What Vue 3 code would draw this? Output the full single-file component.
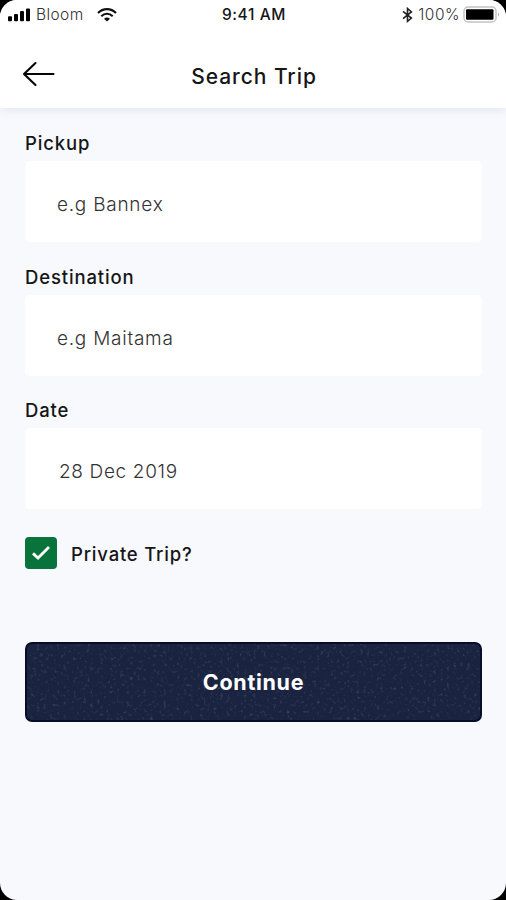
<script setup>
import { ref } from 'vue'

const fields = ref([
  { id: 'pickup', label: 'Pickup', text: 'e.g Bannex' },
  { id: 'destination', label: 'Destination', text: 'e.g Maitama' },
  { id: 'date', label: 'Date', text: '28 Dec 2019' },
])
const isPrivate = ref(true)
</script>

<template>
  <main class="screen">
    <header class="header">
      <div class="status">
        <div class="carrier">
          <svg class="signal" width="23" height="14" viewBox="0 0 23 14">
            <rect x="0" y="8.2" width="4" height="5" rx="1" />
            <rect x="6" y="6" width="4" height="7.2" rx="1" />
            <rect x="12" y="3" width="4" height="10.2" rx="1" />
            <rect x="18" y="0.5" width="4" height="12.7" rx="1" />
          </svg>
          <span class="carrier-name">Bloom</span>
          <svg class="wifi" width="20" height="14" viewBox="0 0 20 14">
            <path d="M1 5.1C6-.2 14-.2 19 5.1" fill="none" stroke="#111" stroke-width="2.2" />
            <path d="M4.3 8.3C7.5 5 12.5 5 15.7 8.3" fill="none" stroke="#111" stroke-width="2" />
            <path d="M7 10.7Q10 8.2 13 10.7L10 13.6Z" fill="#111" />
          </svg>
        </div>
        <span class="time">9:41 AM</span>
        <div class="power">
          <svg class="bluetooth" width="11" height="16" viewBox="0 0 11 16">
            <path d="M1 4.3L9.4 11 5.5 14.3V1.5L9.4 4.9 1 11.7" fill="none" stroke="#222" stroke-width="1.6" />
          </svg>
          <span class="percent">100%</span>
          <svg class="battery" width="37" height="18" viewBox="0 0 37 18">
            <rect x="1" y="1" width="32" height="15" rx="4" fill="#fff" stroke="#c4c4c4" stroke-width="1.5" />
            <rect x="3" y="3.3" width="27.5" height="10.4" rx="1" fill="#000" />
            <path d="M35 6.5q2 2 0 4z" fill="#aaa" />
          </svg>
        </div>
      </div>
      <div class="nav">
        <svg class="back" width="34" height="26" viewBox="0 0 34 26">
          <path d="M13.5 2L2 13L13.5 24M2 13H31.5" fill="none" stroke="#050505" stroke-width="2.1" stroke-linecap="round" stroke-linejoin="round" />
        </svg>
        <h1 class="title">Search Trip</h1>
      </div>
    </header>

    <form class="form" @submit.prevent>
      <div v-for="f in fields" :key="f.id" class="field">
        <span class="label">{{ f.label }}</span>
        <div class="input" :class="f.id"><span>{{ f.text }}</span></div>
      </div>

      <div class="private" @click="isPrivate = !isPrivate">
        <span class="box">
          <svg v-if="isPrivate" width="20" height="16" viewBox="0 0 20 16">
            <path d="M2 8.4L7 13L18 2" fill="none" stroke="#fff" stroke-width="2.8" />
          </svg>
        </span>
        <span class="private-label">Private Trip?</span>
      </div>

      <button class="continue" type="submit">
        <svg class="grain" width="100%" height="100%">
          <filter id="grain" x="0" y="0" width="100%" height="100%">
            <feTurbulence type="fractalNoise" baseFrequency="0.3" numOctaves="3" seed="4" />
            <feColorMatrix values="0 0 0 0 0.4  0 0 0 0 0.47  0 0 0 0 0.62  2.4 0 0 0 -1.35" />
          </filter>
          <rect width="100%" height="100%" filter="url(#grain)" />
        </svg>
        <span class="continue-text">Continue</span>
      </button>
    </form>
  </main>
</template>

<style>
body {
  background: #000;
}
</style>

<style scoped>
.screen {
  box-sizing: border-box;
  width: 506px;
  height: 900px;
  overflow: hidden;
  border-radius: 17px;
  background: #f7f9fd;
  font-family: Inter, "Liberation Sans", sans-serif;
  color: #161616;
}
.header {
  height: 108px;
  background: #fff;
  box-shadow: 0 2px 10px rgba(40, 60, 80, 0.1);
}
.status {
  display: grid;
  grid-template-columns: 1fr auto 1fr;
  align-items: center;
  height: 29px;
  padding: 0 6px 0 8px;
}
.carrier,
.power {
  display: flex;
  align-items: center;
}
.power {
  justify-content: flex-end;
}
.carrier-name {
  margin-left: 5px;
  font-size: 15.5px;
  font-weight: 300;
  letter-spacing: 0.4px;
  color: #333;
}
.wifi {
  margin-left: 13px;
}
.time {
  font-size: 15.5px;
  font-weight: 550;
  letter-spacing: 0.6px;
}
.percent {
  margin: 0 3px 0 5px;
  font-size: 15.5px;
  font-weight: 300;
  letter-spacing: 0.5px;
  color: #333;
}
.nav {
  display: grid;
  grid-template-columns: 34px 1fr 34px;
  align-items: center;
  height: 30px;
  margin-top: 33px;
  padding: 0 22px;
}
.back {
  margin-top: -7px;
  margin-left: -0.5px;
}
.title {
  margin: 0 0 0 2px;
  text-align: center;
  font-size: 21px;
  line-height: 30px;
  font-weight: 450;
  letter-spacing: 0.95px;
}
.form {
  padding: 22px 24px 0 25px;
}
.field {
  height: 133.6px;
}
.label {
  display: block;
  height: 31px;
  font-size: 18.5px;
  line-height: 27px;
  font-weight: 450;
  letter-spacing: 0.87px;
}
.input {
  display: flex;
  align-items: center;
  box-sizing: border-box;
  height: 81px;
  padding: 6px 32px 0;
  border-radius: 5px;
  background: #fff;
  font-size: 19px;
  font-weight: 300;
  letter-spacing: 0.75px;
  color: #333;
}
.date {
  padding-left: 34px;
  letter-spacing: 0.65px;
}
.private {
  display: flex;
  align-items: center;
  gap: 14px;
  height: 32px;
  margin-top: 6px;
}
.box {
  display: flex;
  align-items: center;
  justify-content: center;
  width: 32px;
  height: 32px;
  border-radius: 4px;
  background: #08733a;
}
.private-label {
  padding-top: 2px;
  font-size: 18.5px;
  font-weight: 450;
  letter-spacing: 0.8px;
}
.continue {
  display: grid;
  place-items: center;
  box-sizing: border-box;
  width: 457px;
  height: 80px;
  margin: 73px 0 0;
  padding: 0;
  overflow: hidden;
  border: 2px solid #080d2a;
  border-radius: 7px;
  background: #1a2340;
  color: #fff;
  font-family: inherit;
}
.grain,
.continue-text {
  grid-area: 1 / 1;
}
.grain {
  display: block;
  opacity: 0.25;
}
.continue-text {
  position: relative;
  font-size: 21.5px;
  font-weight: 700;
  letter-spacing: 0.7px;
}
</style>
